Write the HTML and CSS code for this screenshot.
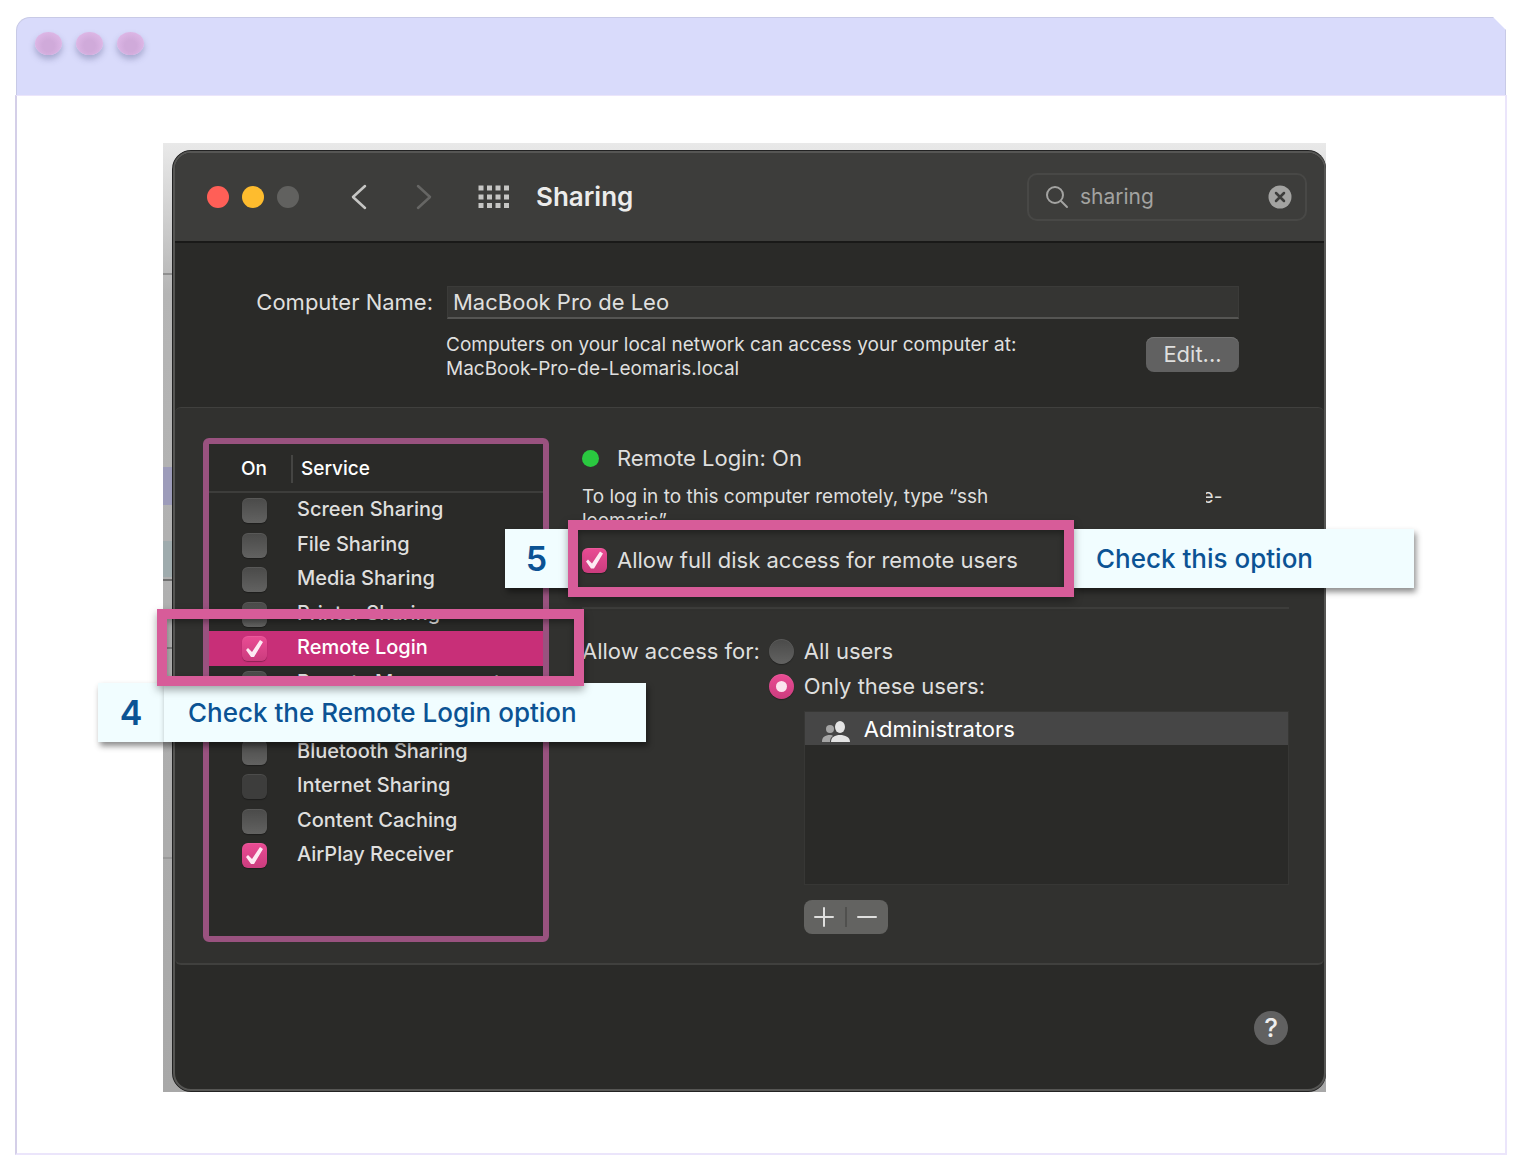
FILE: index.html
```
<!DOCTYPE html>
<html lang="en">
<head>
    <meta charset="UTF-8">
    <title>Sharing - Remote Login</title>
    <link rel="stylesheet" href="styles.css">
</head>
<body>
    <div class="browser">
        <div class="browser-bar">
            <span class="bubble"></span>
            <span class="bubble"></span>
            <span class="bubble"></span>
        </div>
        <div class="browser-body">
            <div class="shot">
                <div class="window">
                    <header class="toolbar">
                        <div class="lights">
                            <span class="light red"></span>
                            <span class="light yellow"></span>
                            <span class="light"></span>
                        </div>
                        <div class="nav">
                            <button type="button" class="icon-btn" aria-label="Back">
                                <svg width="16" height="28" viewBox="0 0 16 28"><path d="M14 3 L2 14 L14 25"/></svg>
                            </button>
                            <button type="button" class="icon-btn off" aria-label="Forward">
                                <svg width="16" height="28" viewBox="0 0 16 28"><path d="M2 3 L14 14 L2 25"/></svg>
                            </button>
                        </div>
                        <button type="button" class="icon-btn" aria-label="Show all">
                            <svg class="dots" width="32" height="24" viewBox="0 0 32 24">
                                <path d="M3 3h.01M11.500 3h.01M20 3h.01M28.500 3h.01M3 12h.01M11.500 12h.01M20 12h.01M28.500 12h.01M3 20.500h.01M11.500 20.500h.01M20 20.500h.01M28.500 20.500h.01"/>
                            </svg>
                        </button>
                        <h1>Sharing</h1>
                        <div class="search">
                            <svg class="glass" width="24" height="24" viewBox="0 0 24 24"><circle cx="10" cy="10" r="8"/><path d="M16 16 L22 22"/></svg>
                            <input type="text" value="sharing" aria-label="Search">
                            <button type="button" class="icon-btn" aria-label="Clear">
                                <svg class="clear" width="24" height="24" viewBox="0 0 24 24"><circle cx="12" cy="12" r="11.500"/><path d="M8 8 L16 16 M16 8 L8 16"/></svg>
                            </button>
                        </div>
                    </header>

                    <section class="name-pane">
                        <label for="computer">Computer Name:</label>
                        <input type="text" id="computer" value="MacBook Pro de Leo">
                        <p class="small">Computers on your local network can access your computer at:<br>MacBook-Pro-de-Leomaris.local</p>
                        <button type="button" class="edit">Edit...</button>
                    </section>

                    <section class="main">
                        <table class="services">
                            <thead>
                                <tr><th class="on">On</th><th><span>Service</span></th></tr>
                            </thead>
                            <tbody>
                                <tr><td><input type="checkbox" id="s1"></td><td><label for="s1">Screen Sharing</label></td></tr>
                                <tr><td><input type="checkbox" id="s2"></td><td><label for="s2">File Sharing</label></td></tr>
                                <tr><td><input type="checkbox" id="s3"></td><td><label for="s3">Media Sharing</label></td></tr>
                                <tr><td><input type="checkbox" id="s4"></td><td><label for="s4">Printer Sharing</label></td></tr>
                                <tr class="active"><td><input type="checkbox" id="s5" checked></td><td><label for="s5">Remote Login</label></td></tr>
                                <tr><td><input type="checkbox" id="s6"></td><td><label for="s6">Remote Management</label></td></tr>
                                <tr><td></td><td></td></tr>
                                <tr><td><input type="checkbox" id="s8"></td><td><label for="s8">Bluetooth Sharing</label></td></tr>
                                <tr><td><input type="checkbox" id="s9" disabled></td><td><label for="s9">Internet Sharing</label></td></tr>
                                <tr><td><input type="checkbox" id="s10"></td><td><label for="s10">Content Caching</label></td></tr>
                                <tr><td><input type="checkbox" id="s11" checked></td><td><label for="s11">AirPlay Receiver</label></td></tr>
                            </tbody>
                        </table>

                        <div class="detail">
                            <div class="status"><span class="led"></span>Remote Login: On</div>
                            <p class="small">To log in to this computer remotely, type “ssh <span class="redacted"></span>e-<br>leomaris”.</p>
                            <div class="full-disk">
                                <input type="checkbox" id="disk" checked>
                                <label for="disk">Allow full disk access for remote users</label>
                            </div>
                            <div class="access">
                                <span class="access-title">Allow access for:</span>
                                <div class="choices">
                                    <div class="choice"><input type="radio" name="who" id="all"><label for="all">All users</label></div>
                                    <div class="choice"><input type="radio" name="who" id="only" checked><label for="only">Only these users:</label></div>
                                    <ul class="users">
                                        <li>
                                            <svg width="28" height="22" viewBox="0 0 28 22">
                                                <g fill="#a5a5a5"><circle cx="8" cy="8" r="4"/><path d="M0 21c0-5 3-7 8-7 2 0 2 0 3 1-2 1-3 3-3 6z"/></g>
                                                <g fill="#e4e4e4"><ellipse cx="18" cy="6" rx="5" ry="6"/><path d="M9 21c0-5 4-7 9-7s10 2 10 7z"/></g>
                                            </svg>
                                            Administrators
                                        </li>
                                    </ul>
                                    <div class="plus-minus">
                                        <button type="button" aria-label="Add"><svg width="20" height="20" viewBox="0 0 20 20"><path d="M1 10H19M10 1V19"/></svg></button>
                                        <button type="button" aria-label="Remove"><svg width="20" height="20" viewBox="0 0 20 20"><path d="M1 10H19"/></svg></button>
                                    </div>
                                </div>
                            </div>
                        </div>
                    </section>

                    <footer class="bottom">
                        <button type="button" class="help">?</button>
                    </footer>
                </div>

                <div class="callout step5">
                    <div class="num">5</div>
                    <div class="mark"></div>
                    <div class="tip">Check this option</div>
                </div>
                <div class="callout step4">
                    <div class="mark"></div>
                    <div class="tips">
                        <div class="num">4</div>
                        <div class="tip">Check the Remote Login option</div>
                    </div>
                </div>
            </div>
        </div>
    </div>
</body>
</html>
```
FILE: styles.css
```
/* reset css */
* {
    box-sizing: border-box;
}
body, h1, p, ul {
    margin: 0;
    padding: 0;
}
ul {
    list-style: none;
}
body {
    padding: 17px 23px 17px 15px;
    background: #fff;
    color: #dfdfde;
    font: 22px/28px Inter, "Liberation Sans", sans-serif;
}
input, button {
    margin: 0;
    padding: 0;
    border: 0;
    color: inherit;
    font: inherit;
    background: none;
}

/* outer browser frame */
.browser-bar {
    display: flex;
    gap: 14px;
    margin: 0 1px;
    padding: 14px 18px;
    height: 78px;
    border: 1px solid #c8cae6;
    border-bottom: 0;
    border-radius: 14px 0 0 0;
    background: #d9dbfb;
    clip-path: polygon(0 0, calc(100% - 13px) 0, 100% 13px, 100% 100%, 0 100%);
}
.bubble {
    width: 27px;
    height: 23px;
    border-radius: 50%;
    background: radial-gradient(at 50% 60%, #d0aada 30%, #dfb9e8 80%);
    box-shadow: 0 4px 6px rgba(90, 90, 140, .4);
}
.browser-body {
    padding: 47px 179px 61px 146px;
    border: 2px solid #ebe5fb;
    border-top-width: 1px;
    border-left-color: #d4cfe8;
}

/* screenshot */
.shot {
    position: relative;
    padding: 8px 0 1px 10px;
    background:
        linear-gradient(#8f8f8f, #8f8f8f) 0 130px / 10px 2px no-repeat,
        linear-gradient(#9d9cba, #9d9cba) 0 324px / 10px 38px no-repeat,
        linear-gradient(#9fabad, #9fabad) 0 398px / 10px 36px no-repeat,
        linear-gradient(#6f6f6f, #6f6f6f) 0 436px / 10px 2px no-repeat,
        linear-gradient(#7f7f7f, #7f7f7f) 0 504px / 10px 2px no-repeat,
        linear-gradient(#999, #999) 0 714px / 10px 2px no-repeat,
        linear-gradient(#e9e9e9, #b5b5b5 150px, #a8a8a8);
}
.window {
    overflow: hidden;
    border: 2px solid #565654;
    border-radius: 18px;
    background: #2a2a28;
    box-shadow: -1px 0 #222, 0 1px #222, 0 -1px #222;
}
.toolbar {
    display: flex;
    align-items: center;
    padding: 0 17px 1px 32px;
    height: 90px;
    border-bottom: 2px solid #191918;
    background: #3d3d3b;
}
.lights {
    display: flex;
    gap: 13px;
}
.light {
    width: 22px;
    height: 22px;
    border-radius: 50%;
    background: #61615f;
}
.red {
    background: #ff5f57;
}
.yellow {
    background: #febc2e;
}
.nav {
    display: flex;
    gap: 49px;
    margin: 0 46px 0 52px;
}
.icon-btn {
    display: flex;
    color: #c6c6c4;
}
.off {
    color: #666664;
}
svg {
    fill: none;
    stroke: currentColor;
    stroke-width: 2.500;
    stroke-linecap: round;
    stroke-linejoin: round;
}
.dots {
    stroke-width: 5;
    stroke-linecap: square;
}
h1 {
    margin-left: 26px;
    color: #ececeb;
    font-size: 26px;
    font-weight: 600;
}
.search {
    display: flex;
    align-items: center;
    gap: 11px;
    margin-left: auto;
    padding: 0 13px 0 16px;
    width: 280px;
    height: 48px;
    border: 2px solid #484846;
    border-radius: 10px;
    color: #a3a3a1;
    font-size: 21px;
}
.search input {
    flex: 1;
    min-width: 0;
}
.glass {
    stroke-width: 2;
}
.clear circle {
    fill: #a3a3a1;
    stroke: none;
}
.clear path {
    stroke: #3d3d3b;
}

/* computer name */
.name-pane {
    display: grid;
    grid-template-columns: 258px 1fr 93px;
    row-gap: 12px;
    padding: 43px 85px 25px 0;
    height: 164px;
}
.name-pane label {
    padding: 2px 0;
    text-align: right;
}
#computer {
    grid-column: 2 / 4;
    margin-left: 14px;
    padding: 0 5px;
    height: 33px;
    border: 1px solid #3b3b39;
    border-bottom: 2px solid #555553;
    background: #353533;
}
.small {
    font-size: 19px;
    line-height: 24px;
}
.name-pane .small {
    grid-column: 2;
    margin-left: 13px;
}
.edit {
    margin-top: 4px;
    height: 35px;
    border-radius: 8px;
    background: #616161;
    box-shadow: inset 0 1px #727272;
}

/* services */
.main {
    display: flex;
    gap: 33px;
    padding: 30px 35px 21px 28px;
    border: 2px solid #40403e;
    border-width: 1px 0 2px;
    border-radius: 6px;
    background: #31312f;
}
.services {
    flex: none;
    display: block;
    width: 346px;
    height: 504px;
    border: 6px solid #99527f;
    border-radius: 6px;
    background: #2a2a28;
    border-spacing: 0;
    font-size: 20px;
}
.services thead, .services tbody {
    display: block;
}
.services tr {
    display: flex;
    height: 34px;
}
.services tbody tr:nth-child(odd) {
    height: 35px;
}
.services thead tr {
    align-items: center;
    padding-top: 3px;
    height: 49px;
    border-bottom: 2px solid #3d3d3b;
    color: #fff;
    font-size: 19px;
}
.services th, .services td {
    padding: 0;
    text-align: left;
    font-weight: 500;
}
.services th.on {
    padding-left: 32px;
    width: 84px;
    border-right: 2px solid #454543;
}
.services th span {
    padding-left: 8px;
}
.services td:first-child {
    padding: 5px 0 0 33px;
    width: 88px;
}
.services td label {
    display: block;
    line-height: 32px;
}
.services .active {
    background: #c82f78;
    color: #fff;
}

/* check boxes and radios */
input[type=checkbox], input[type=radio] {
    display: block;
    flex: none;
    appearance: none;
    width: 25px;
    height: 25px;
    border-radius: 6px;
    background: linear-gradient(#4a4a49, #626261);
    box-shadow: 0 1px 1px rgba(0, 0, 0, .3), inset 0 1px rgba(255, 255, 255, .08);
}
input[type=radio] {
    border-radius: 50%;
}
input[type=checkbox]:disabled {
    background: #3d3d3c;
}
input[type=checkbox]:checked, input[type=radio]:checked {
    background: linear-gradient(#ea4c94, #cb3c7e);
}
input[type=checkbox]:checked::before {
    content: '';
    display: block;
    width: 25px;
    height: 25px;
    background: #fdeaf3;
    clip-path: polygon(4px 14px, 6px 12px, 10px 16px, 18px 4px, 21px 6px, 12px 21px, 9px 21px);
}
input[type=radio]:checked::before {
    content: '';
    display: block;
    margin: 7px;
    width: 11px;
    height: 11px;
    border-radius: 50%;
    background: #fbe3ee;
}

/* right side */
.detail {
    flex: 1;
    padding-top: 6px;
}
.status {
    display: flex;
    align-items: center;
    gap: 18px;
    margin-bottom: 13px;
}
.led {
    width: 17px;
    height: 17px;
    border-radius: 50%;
    background: #2ac940;
}
.redacted {
    display: inline-block;
    position: relative;
    margin-right: -3px;
    width: 212px;
    height: 24px;
    background: #31312f;
    vertical-align: bottom;
}
.full-disk {
    display: flex;
    align-items: center;
    gap: 10px;
    margin-top: 13px;
    padding-bottom: 33px;
    border-bottom: 2px solid #3d3d3b;
}
.access {
    display: flex;
    gap: 9px;
    padding-top: 28px;
}
.choices {
    flex: 1;
}
.choice {
    display: flex;
    align-items: center;
    gap: 10px;
    margin-bottom: 7px;
}
.users {
    margin: 11px 0 15px 35px;
    height: 174px;
    border: 1px solid #373735;
    background: #2a2a28;
}
.users li {
    display: flex;
    align-items: center;
    gap: 14px;
    padding: 0 17px;
    height: 33px;
    background: #464646;
    color: #fff;
}
.users svg {
    margin-top: 6px;
    stroke: none;
}
.plus-minus {
    display: flex;
    align-items: center;
    margin-left: 35px;
    width: 84px;
    height: 34px;
    border-radius: 8px;
    background: #636361;
}
.plus-minus button {
    display: flex;
    justify-content: center;
    flex: 1;
}
.plus-minus button + button {
    border-left: 2px solid #50504e;
}
.plus-minus svg {
    stroke-width: 2;
}

/* bottom bar */
.bottom {
    display: flex;
    justify-content: flex-end;
    padding: 46px 36px 44px;
}
.help {
    width: 34px;
    height: 34px;
    border-radius: 50%;
    background: #616161;
    color: #eee;
    font-size: 26px;
    font-weight: 500;
}

/* callouts */
.callout {
    position: absolute;
    color: #0b5394;
    font-size: 26px;
    font-weight: 500;
}
.mark {
    position: relative;
    z-index: 1;
    height: 77px;
    border: 10px solid #d75c99;
    box-shadow: 0 4px 8px rgba(0, 0, 0, .35), inset 0 3px 6px rgba(0, 0, 0, .35);
}
.num, .tip {
    height: 59px;
    background: #f1fdff;
    line-height: 59px;
    white-space: nowrap;
    box-shadow: 2px 4px 6px rgba(0, 0, 0, .45);
}
.num {
    font-size: 34px;
    font-weight: 600;
    text-align: center;
}
.step5 {
    display: flex;
    align-items: center;
    top: 377px;
    left: 342px;
}
.step5 .num {
    width: 63px;
}
.step5 .mark {
    width: 506px;
}
.step5 .tip {
    padding-left: 22px;
    width: 340px;
}
.step4 {
    top: 466px;
    left: -65px;
}
.step4 .mark {
    margin: 0 0 -3px 59px;
    width: 427px;
}
.tips {
    display: flex;
}
.step4 .num {
    width: 66px;
}
.step4 .tip {
    padding-left: 24px;
    width: 482px;
}
```
